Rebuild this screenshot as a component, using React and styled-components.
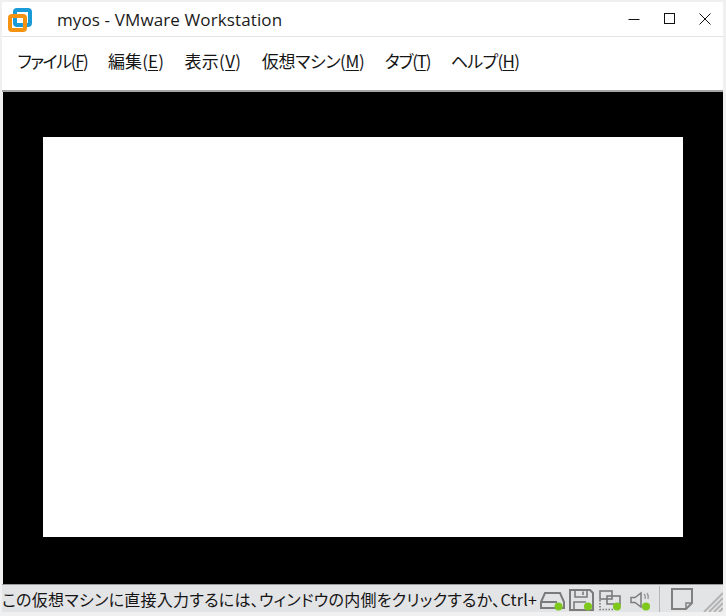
import React from "react";
import styled, { createGlobalStyle } from "styled-components";

const Global = createGlobalStyle`
  html, body { margin: 0; padding: 0; background: #f0f0f0; overflow: hidden; }
  #root { width: 726px; height: 616px; }
`;

const FONT = `"Noto Sans CJK JP", "Noto Sans", sans-serif`;

const Frame = styled.div`
  width: 726px;
  height: 616px;
  box-sizing: border-box;
  padding: 2px 3px 4px 2px;
  background: #f0f0f0;
  display: flex;
  flex-direction: column;
  font-family: ${FONT};
  color: #111;
  overflow: hidden;
`;

const TitleBar = styled.div`
  height: 35px;
  box-sizing: border-box;
  flex: none;
  background: #fff;
  border-bottom: 1px solid #e3e3e3;
  display: flex;
  align-items: center;
  padding-left: 5px;
`;

const Title = styled.span`
  font-family: "Open Sans", "Noto Sans", sans-serif;
  font-size: 17px;
  letter-spacing: 0.12px;
  margin-left: 24px;
  flex: 1;
  color: #1a1a1a;
`;

const WinButtons = styled.div`
  display: flex;
  align-items: center;
  gap: 24px;
  padding-right: 12px;
`;

const MenuBar = styled.nav`
  height: 55px;
  box-sizing: border-box;
  flex: none;
  background: #fff;
  border-bottom: 2px solid #a6a6a6;
  display: flex;
  align-items: center;
  gap: 20.5px;
  padding: 0 0 6px 15.5px;
`;

const MenuItem = styled.span`
  font-size: 17px;
  font-feature-settings: "palt";
  letter-spacing: ${(p) => p.$track}px;
  color: #151515;
  white-space: nowrap;
  u { text-underline-offset: 2px; text-decoration-thickness: 1px; }
`;

const Screen = styled.main`
  flex: 1;
  margin-left: 1px;
  background: #000;
  display: flex;
  align-items: center;
  justify-content: center;
  padding-bottom: 2px;
`;

const Display = styled.div`
  width: 640px;
  height: 400px;
  background: #fff;
`;

const StatusBar = styled.footer`
  height: 28px;
  flex: none;
  position: relative;
  background: #e3e4e6;
  border-top: 1px solid #9a9a9a;
  box-sizing: border-box;
  display: flex;
  align-items: center;
`;

const StatusText = styled.div`
  width: 538px;
  flex: none;
  white-space: nowrap;
  font-size: 16px;
  letter-spacing: 0.28px;
  font-feature-settings: "palt";
  color: #151515;
`;

const Tray = styled.div`
  display: flex;
  align-items: center;
`;

const Divider = styled.div`
  width: 1px;
  height: 26px;
  background: #b5b5b5;
  margin: 0 11px 0 7px;
`;

const Grip = styled.svg`
  position: absolute;
  right: 0;
  bottom: 0;
`;

const Logo = () => (
  <svg width="26" height="26" viewBox="0 0 26 26">
    <rect x="8" y="4" width="15" height="15" rx="2" fill="none" stroke="#1a9ad6" strokeWidth="4" />
    <rect x="3" y="10" width="15" height="14" rx="2" fill="none" stroke="#f5920f" strokeWidth="4" />
  </svg>
);

const MinIcon = () => (
  <svg width="12" height="12" viewBox="0 0 12 12"><path d="M0.5 6.5H11.5" stroke="#111" strokeWidth="1" /></svg>
);
const MaxIcon = () => (
  <svg width="11" height="12" viewBox="0 0 11 12"><rect x="0.5" y="0.5" width="10" height="10" fill="none" stroke="#111" strokeWidth="1" /></svg>
);
const CloseIcon = () => (
  <svg width="12" height="12" viewBox="0 0 12 12"><path d="M0.5 0.5L11.5 11.5M11.5 0.5L0.5 11.5" stroke="#111" strokeWidth="1" /></svg>
);

const Dot = ({ cx, cy }) => <circle cx={cx} cy={cy} r="4" fill="#7ec81e" stroke="none" />;

const TrayIcon = styled.svg`
  flex: none;
  display: block;
`;

const DiskIcon = () => (
  <TrayIcon width="28" height="27" viewBox="0 0 28 27" fill="none" stroke="#7b7b7b" strokeWidth="2">
    <path d="M5 8H20L24 17V23H1V17Z" />
    <path d="M1 17H17" />
    <Dot cx="18.5" cy="21.5" />
  </TrayIcon>
);
const FloppyIcon = () => (
  <TrayIcon width="30" height="27" viewBox="0 0 30 27" fill="none" stroke="#7b7b7b" strokeWidth="2">
    <path d="M2 5H22L25 8V25H2Z" />
    <path d="M7 5V12H19V5M15 6.5V10M6 25V17H18" strokeWidth="1.6" />
    <Dot cx="20" cy="21.5" />
  </TrayIcon>
);
const NetIcon = () => (
  <TrayIcon width="30" height="27" viewBox="0 0 30 27" fill="none" stroke="#7b7b7b" strokeWidth="1.6">
    <rect x="2" y="6" width="12" height="8" />
    <rect x="9" y="11" width="13" height="8" />
    <path d="M2 15V24.5H15" strokeDasharray="1.5 1.5" />
    <Dot cx="19" cy="21.5" />
  </TrayIcon>
);
const SoundIcon = () => (
  <TrayIcon width="24" height="27" viewBox="0 0 24 27" fill="none" stroke="#7b7b7b" strokeWidth="1.5">
    <path d="M3 12.5H7L13 8V22L7 17.5H3Z" />
    <path d="M16 9Q18 11 17 14" stroke="#a0a0a0" />
    <path d="M19 8Q21 11 20 14" stroke="#a0a0a0" />
    <Dot cx="18" cy="21.5" />
  </TrayIcon>
);
const NoteIcon = () => (
  <TrayIcon width="22" height="22" viewBox="0 0 22 22" fill="none" stroke="#808080" strokeWidth="2">
    <path d="M1 1H21V15L15 21H1Z" />
    <path d="M21 15H15V21" strokeWidth="1.5" />
  </TrayIcon>
);

const items = [
  ["ファイル(", "F", ")", -1.4],
  ["編集(", "E", ")", 0.1],
  ["表示(", "V", ")", 0.3],
  ["仮想マシン(", "M", ")", -0.35],
  ["タブ(", "T", ")", -1.2],
  ["ヘルプ(", "H", ")", -0.7],
];

export default function App() {
  return (
    <>
      <Global />
      <Frame>
        <TitleBar>
          <Logo />
          <Title>myos - VMware Workstation</Title>
          <WinButtons>
            <MinIcon />
            <MaxIcon />
            <CloseIcon />
          </WinButtons>
        </TitleBar>
        <MenuBar>
          {items.map(([a, k, b, track]) => (
            <MenuItem key={k} $track={track}>
              {a}
              <u>{k}</u>
              {b}
            </MenuItem>
          ))}
        </MenuBar>
        <Screen>
          <Display />
        </Screen>
        <StatusBar>
          <StatusText>この仮想マシンに直接入力するには、ウィンドウの内側をクリックするか、Ctrl+</StatusText>
          <Tray>
            <DiskIcon />
            <FloppyIcon />
            <NetIcon />
            <SoundIcon />
            <Divider />
            <NoteIcon />
          </Tray>
          <Grip width="20" height="20" viewBox="0 0 20 20">
            <path d="M1 20L20 1M6 20L20 6M11 20L20 11M16 20L20 16" stroke="#b4b4b4" strokeWidth="2" />
          </Grip>
        </StatusBar>
      </Frame>
    </>
  );
}
